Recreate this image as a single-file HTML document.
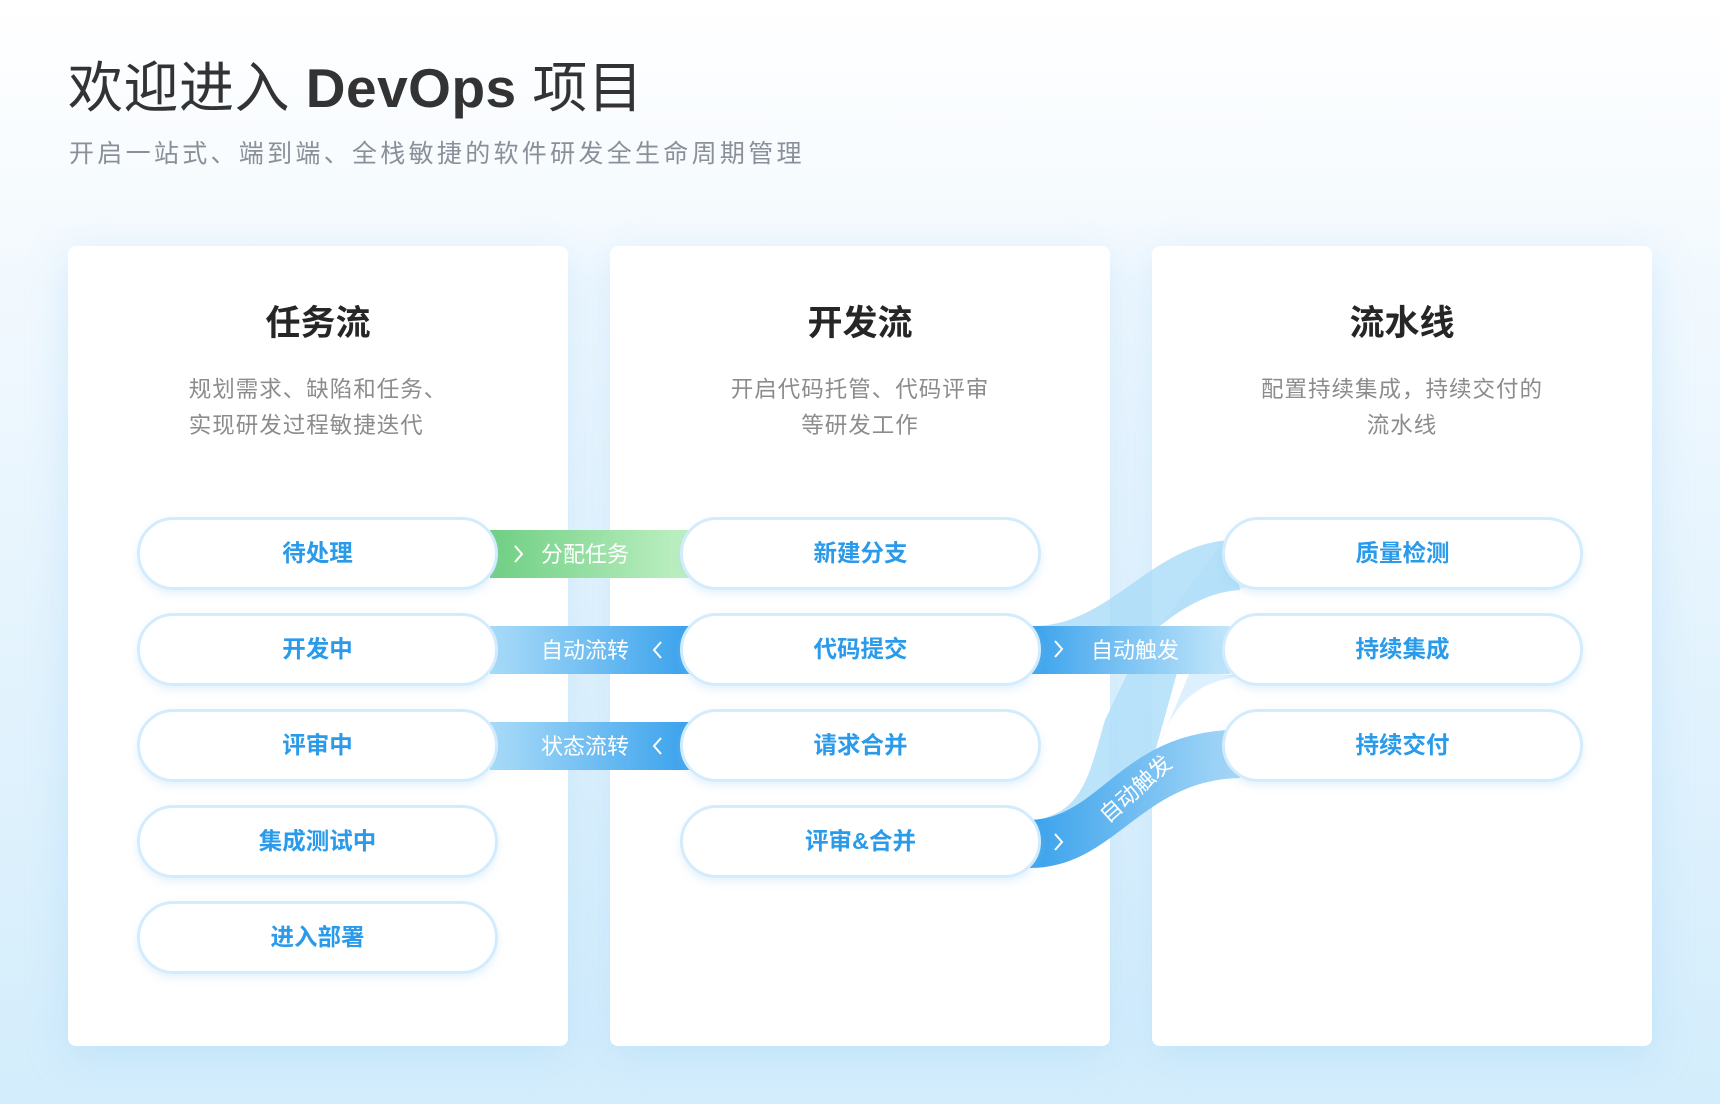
<!DOCTYPE html>
<html><head><meta charset="utf-8"><style>
*{margin:0;padding:0;box-sizing:border-box}
body{width:1720px;height:1104px;overflow:hidden;font-family:"Liberation Sans","Noto Sans CJK SC",sans-serif;background:linear-gradient(180deg,#ffffff 0%,#f2f9fe 25%,#e3f3fd 60%,#d3edfc 100%);position:relative}
.h1{position:absolute;left:68px;top:52px;font-size:55px;color:#333;line-height:72px;white-space:nowrap;letter-spacing:0.5px}
.h1 b{font-weight:700;color:#333}
.sub{position:absolute;left:69px;top:137px;font-size:25px;color:#8a9099;line-height:34px;white-space:nowrap;letter-spacing:3.3px}
.card{position:absolute;top:246px;width:500px;height:800px;background:#fff;border-radius:8px;box-shadow:0 10px 40px rgba(150,205,245,.35)}
.ct{position:absolute;left:0;right:0;top:302px;text-align:center;font-size:35px;font-weight:700;color:#262626;line-height:44px}
.cd{position:absolute;top:372px;text-align:center;font-size:22.5px;color:#8c8c8c;line-height:36px;width:500px;letter-spacing:1px}
.pill{position:absolute;width:361px;height:73px;border:3px solid #d3ecfd;border-radius:37px;background:#fff;box-shadow:0 4px 8px rgba(150,205,245,.25);text-align:center;line-height:67px;font-size:23.5px;color:#2a9aea;font-weight:700;z-index:3}
svg{position:absolute;left:0;top:0;z-index:2}
</style></head><body>
<div class="h1">欢迎进入 <b>DevOps</b> 项目</div>
<div class="sub">开启一站式、端到端、全栈敏捷的软件研发全生命周期管理</div>

<div class="card" style="left:68px"></div>
<div class="card" style="left:610px"></div>
<div class="card" style="left:1152px"></div>

<div class="ct" style="left:68px;width:500px;right:auto">任务流</div>
<div class="ct" style="left:610px;width:500px;right:auto">开发流</div>
<div class="ct" style="left:1152px;width:500px;right:auto">流水线</div>

<div class="cd" style="left:68px"><div style="display:inline-block;text-align:left">规划需求、缺陷和任务、<br>实现研发过程敏捷迭代</div></div>
<div class="cd" style="left:610px">开启代码托管、代码评审<br>等研发工作</div>
<div class="cd" style="left:1152px">配置持续集成，持续交付的<br>流水线</div>

<svg width="1720" height="1104" viewBox="0 0 1720 1104">
<defs>
<linearGradient id="g" x1="0" x2="1"><stop offset="0" stop-color="#6fcf83"/><stop offset="1" stop-color="#bff0c4"/></linearGradient>
<linearGradient id="bl" x1="0" x2="1"><stop offset="0" stop-color="#a9dbf8"/><stop offset="1" stop-color="#3aa2ec"/></linearGradient>
<linearGradient id="br" x1="0" x2="1"><stop offset="0" stop-color="#3aa2ec"/><stop offset="1" stop-color="#c4e7fb"/></linearGradient>
<linearGradient id="bd" x1="0" x2="1"><stop offset="0" stop-color="#3aa2ec"/><stop offset="1" stop-color="#a8d8f7"/></linearGradient>
</defs>
<path d="M1160 626 C1190 600 1210 592 1245 588 L1222 543 Z" fill="#cfeafb" opacity=".6"/>
<path d="M1033 626 C1110 626 1150 545 1230 540 L1240 590 C1210 592 1185 606 1160 626 Z" fill="#a9dbf8" opacity=".8"/>
<path d="M1158 748 C1175 700 1200 680 1245 676 L1190 672 Z" fill="#dcf1fd"/>
<path d="M1035 820 C1085 812 1090 770 1105 720 L1128 672 L1140 626 L1190 626 L1155 752 C1140 790 1120 805 1035 822 Z" fill="#b4e0fa" opacity=".9"/>
<rect x="1030" y="626" width="200" height="48" fill="url(#br)"/>
<path d="M1030 820 C1100 818 1120 735 1230 730 L1240 778 C1140 780 1115 868 1030 868 Z" fill="url(#bd)"/>
<rect x="490" y="530" width="200" height="48" fill="url(#g)"/>
<rect x="490" y="626" width="200" height="48" fill="url(#bl)"/>
<rect x="490" y="722" width="200" height="48" fill="url(#bl)"/>
<g fill="none" stroke="#fff" stroke-width="2">
<path d="M515 546 L522 554 L515 562"/>
<path d="M661 642 L654 650 L661 658"/>
<path d="M661 738 L654 746 L661 754"/>
<path d="M1055 641 L1062 649 L1055 657"/>
<path d="M1055 834 L1062 842 L1055 850"/>
</g>
<g fill="#fff" font-size="22" font-family="Liberation Sans,Noto Sans CJK SC,sans-serif">
<text x="541" y="562">分配任务</text>
<text x="541" y="658">自动流转</text>
<text x="541" y="754">状态流转</text>
<text x="1091" y="658">自动触发</text>
<text x="0" y="0" transform="translate(1108,824) rotate(-42)">自动触发</text>
</g>
</svg>

<div class="pill" style="left:137px;top:517px">待处理</div>
<div class="pill" style="left:137px;top:613px">开发中</div>
<div class="pill" style="left:137px;top:709px">评审中</div>
<div class="pill" style="left:137px;top:805px">集成测试中</div>
<div class="pill" style="left:137px;top:901px">进入部署</div>

<div class="pill" style="left:680px;top:517px">新建分支</div>
<div class="pill" style="left:680px;top:613px">代码提交</div>
<div class="pill" style="left:680px;top:709px">请求合并</div>
<div class="pill" style="left:680px;top:805px">评审&amp;合并</div>

<div class="pill" style="left:1222px;top:517px">质量检测</div>
<div class="pill" style="left:1222px;top:613px">持续集成</div>
<div class="pill" style="left:1222px;top:709px">持续交付</div>
</body></html>
